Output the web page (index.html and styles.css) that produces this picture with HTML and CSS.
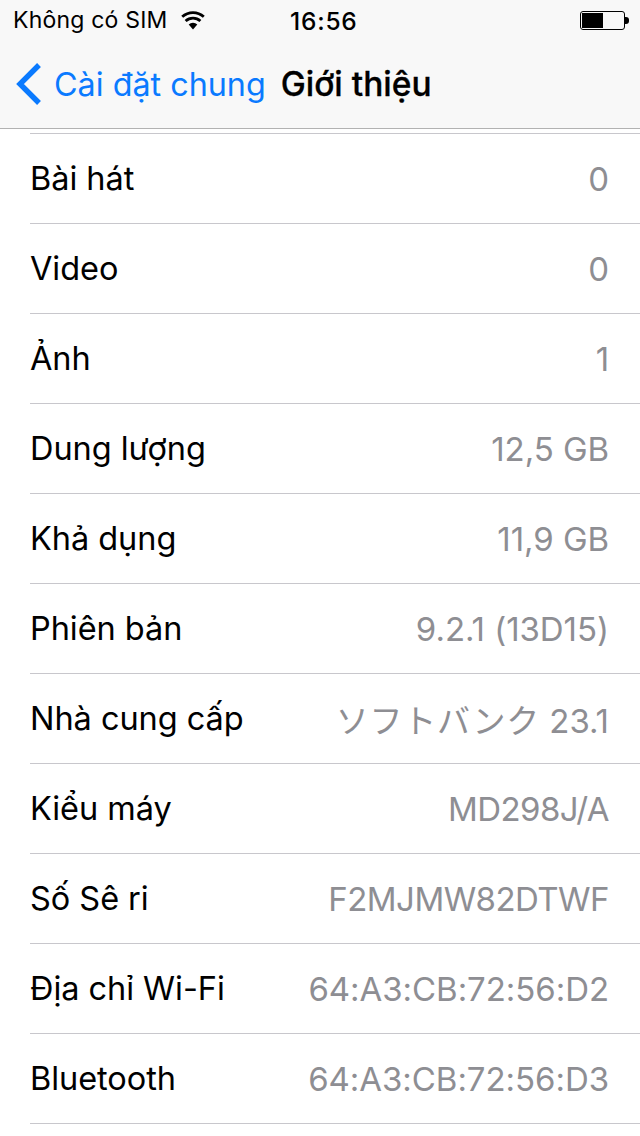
FILE: index.html
```html
<!DOCTYPE html>
<html lang="vi">
<head>
<meta charset="utf-8">
<title>Giới thiệu</title>
<link rel="stylesheet" href="styles.css">
</head>
<body>
<header class="bar">
  <div class="status">
    <div class="status-left">
      <span>Không có SIM</span>
      <svg class="wifi" width="26" height="20" viewBox="0 0 26 20"><path d="M13 19.5 8.7 14.4a6.4 6.4 0 0 1 8.6 0Z" fill="#000"/><path d="M5.6 11a11 11 0 0 1 14.8 0M2.2 6.8a16 16 0 0 1 21.6 0" fill="none" stroke="#000" stroke-width="2.8"/></svg>
    </div>
    <div class="time">16:56</div>
    <div class="battery"><span class="battery-body"><span class="battery-fill"></span></span><span class="battery-tip"></span></div>
  </div>
  <nav class="nav">
    <svg class="chev" width="28" height="44" viewBox="0 0 28 44"><path d="M24 3 5 22l19 19" fill="none" stroke="#0a7aff" stroke-width="5.4"/></svg>
    <span class="back">Cài đặt chung</span>
    <span class="title">Giới thiệu</span>
  </nav>
</header>
<main class="list">
  <div class="row"><span>Bài hát</span><span class="val">0</span></div>
  <div class="row"><span>Video</span><span class="val">0</span></div>
  <div class="row"><span>Ảnh</span><span class="val">1</span></div>
  <div class="row"><span>Dung lượng</span><span class="val">12,5 GB</span></div>
  <div class="row"><span>Khả dụng</span><span class="val">11,9 GB</span></div>
  <div class="row"><span>Phiên bản</span><span class="val">9.2.1 (13D15)</span></div>
  <div class="row"><span>Nhà cung cấp</span><span class="val"><span class="kana">ソフトバンク</span> 23.1</span></div>
  <div class="row"><span>Kiểu máy</span><span class="val tight">MD298J/A</span></div>
  <div class="row"><span>Số Sê ri</span><span class="val tight">F2MJMW82DTWF</span></div>
  <div class="row"><span>Địa chỉ Wi-Fi</span><span class="val">64:A3:CB:72:56:D2</span></div>
  <div class="row"><span>Bluetooth</span><span class="val">64:A3:CB:72:56:D3</span></div>
</main>
</body>
</html>
```
FILE: styles.css
```css
html, body { margin: 0; padding: 0; height: 100%; overflow: hidden; background: #fff; }
body { font-family: Inter, "Noto Sans CJK JP", sans-serif; color: #000; }
.bar { height: 128px; background: #f8f8f8; border-bottom: 1px solid #b2b2b2; }
.status { position: relative; height: 40px; display: flex; align-items: center; justify-content: space-between; padding: 0 11px 0 13px; font-size: 23px; letter-spacing: .2px; }
.status-left { display: flex; align-items: center; gap: 12px; }
.wifi { display: block; }
.time { position: absolute; left: 290px; top: 6px; font-size: 24.5px; font-weight: 500; letter-spacing: .8px; }
.battery { display: flex; align-items: center; }
.battery-body { width: 41px; height: 15px; border: 1px solid #000; border-radius: 3px; padding: 1px; display: block; }
.battery-fill { display: block; width: 21px; height: 15px; background: #000; }
.battery-tip { width: 4px; height: 7px; background: #000; border-radius: 0 3px 3px 0; }
.nav { height: 88px; display: flex; align-items: center; padding-left: 15px; font-size: 32.3px; }
.chev { margin-right: 11px; flex: none; }
.back { color: #0a7aff; }
.title { font-weight: 500; font-size: 33.5px; margin-left: 15px; -webkit-text-stroke: .3px #000; }
.list { padding-left: 30px; padding-top: 4px; }
.row { height: 89px; border-top: 1px solid #c8c7cc; display: flex; align-items: center; justify-content: space-between; padding-right: 31px; font-size: 32.5px; letter-spacing: -.05px; }
.row:last-child { border-bottom: 1px solid #c8c7cc; }
.val { color: #8e8e93; font-size: 33px; letter-spacing: -.05px; }
.tight { letter-spacing: -.55px; }
.kana { letter-spacing: .8px; }
```
